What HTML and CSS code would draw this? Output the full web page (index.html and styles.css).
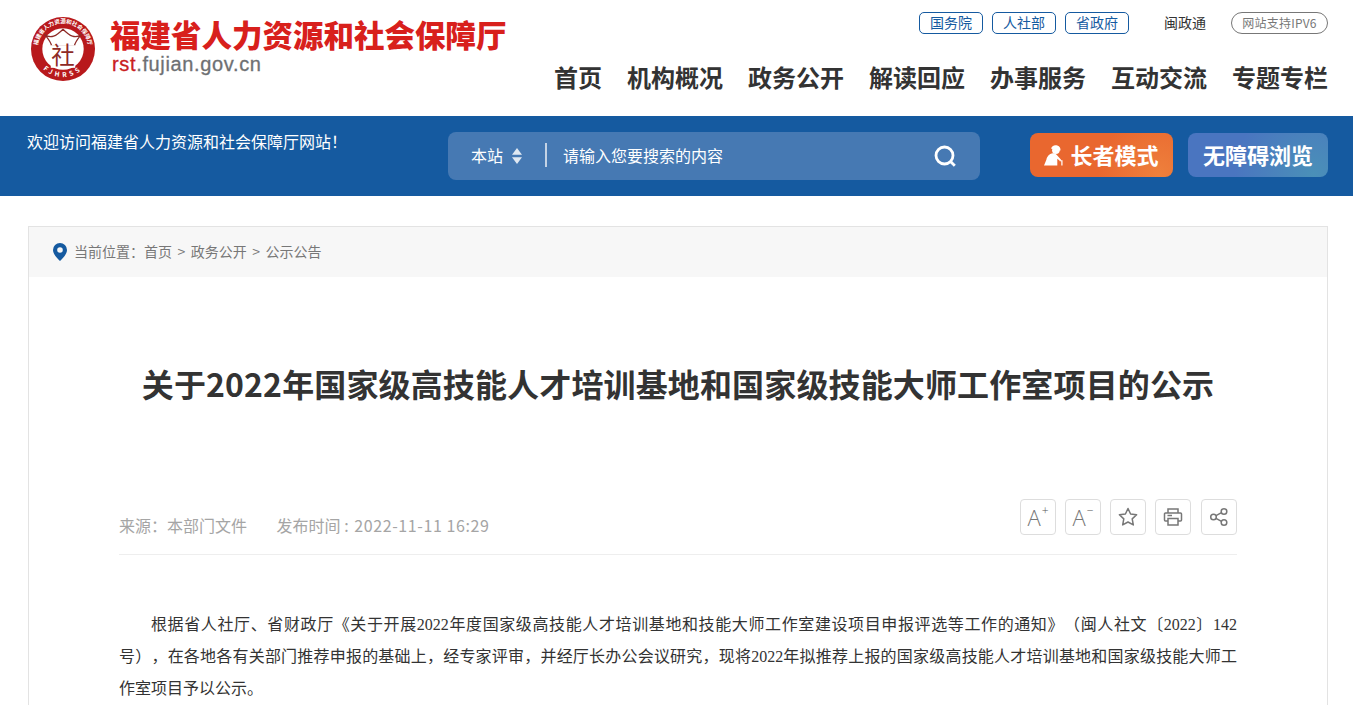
FILE: index.html
```html
<!DOCTYPE html>
<html lang="zh-CN">
<head>
    <meta charset="UTF-8">
    <title>关于2022年国家级高技能人才培训基地和国家级技能大师工作室项目的公示</title>
    <link rel="stylesheet" href="styles.css">
</head>
<body>
    <header class="cabecera">
        <div class="marca">
            <svg class="sello" viewBox="0 0 68 68" width="64" height="64">
                <defs>
                    <path id="aroArriba" d="M10.500 47A27 27 0 1 1 57.500 47"/>
                    <path id="aroAbajo" d="M6 46A31 31 0 0 0 62 46"/>
                </defs>
                <circle cx="34" cy="34" r="34" fill="#b8191c"/>
                <circle cx="34" cy="34" r="22" fill="#fff"/>
                <text class="sello-aro"><textPath href="#aroArriba" startOffset="50%" text-anchor="middle">福建省人力资源和社会保障厅</textPath></text>
                <text class="sello-pie"><textPath href="#aroAbajo" startOffset="50%" text-anchor="middle">FJHRSS</textPath></text>
                <path d="M14 18c7 6 13 2 20-5 7 7 13 11 20 5-4 5-7 8-8 13H22c-1-5-4-8-8-13z" fill="#fff" stroke="#8e2a26" stroke-width="1.300"/>
                <rect x="21" y="30" width="26" height="24" fill="#fff"/>
                <text x="34" y="50" class="sello-centro" text-anchor="middle">社</text>
            </svg>
            <div class="marca-textos">
                <div class="marca-nombre">福建省人力资源和社会保障厅</div>
                <div class="marca-url"><span class="rojo">rst</span>.fujian.gov.cn</div>
            </div>
        </div>
        <div class="cabecera-der">
            <div class="enlaces">
                <a class="pastilla">国务院</a>
                <a class="pastilla">人社部</a>
                <a class="pastilla">省政府</a>
                <a class="minzheng">闽政通</a>
                <a class="ipv6">网站支持IPV6</a>
            </div>
            <nav class="menu">
                <a>首页</a>
                <a>机构概况</a>
                <a>政务公开</a>
                <a>解读回应</a>
                <a>办事服务</a>
                <a>互动交流</a>
                <a>专题专栏</a>
            </nav>
        </div>
    </header>

    <div class="franja">
        <div class="bienvenida">欢迎访问福建省人力资源和社会保障厅网站！</div>
        <div class="buscador">
            <span class="ambito">本站</span>
            <svg class="flechas" viewBox="0 0 10 16" width="10" height="16">
                <path d="M5 0l5 6.800H0zM5 16L0 9.200h10z" fill="#dfe8f2"/>
            </svg>
            <span class="separador"></span>
            <span class="consulta">请输入您要搜索的内容</span>
            <svg class="lupa" viewBox="0 0 22 22" width="22" height="22">
                <circle cx="10.500" cy="10.500" r="8.500" fill="none" stroke="#fff" stroke-width="2.800"/>
                <path d="M16.500 16.500l4.300 4.300" stroke="#fff" stroke-width="2.800" fill="none"/>
            </svg>
        </div>
        <a class="boton boton-mayores">
            <svg viewBox="0 0 20 22" width="19" height="22">
                <path d="M7.500 4.500C8 1.500 11 0 14 1c2.500.8 3.800 3 3.300 5.300-4-.2-7-1.500-9.800-1.800z" fill="#fff"/>
                <circle cx="12.500" cy="6" r="4" fill="#fff"/>
                <path d="M8 9.500C4 11 3 14 2.500 16L0 22h14v-7l3 2.200 1-1.200-5-5.500c-1.500-1.500-3-1.500-5-1z" fill="#fff"/>
                <path d="M16.500 16.500H19.500V22h-1.300v-4.300h-1.700z" fill="#fff"/>
            </svg>
            长者模式
        </a>
        <a class="boton boton-accesible">无障碍浏览</a>
    </div>

    <main class="tarjeta">
        <div class="migas">
            <svg viewBox="0 0 14 18" width="14" height="18">
                <path fill-rule="evenodd" d="M7 0a7 7 0 0 1 7 7c0 4-4 8-7 11-3-3-7-7-7-11a7 7 0 0 1 7-7zm0 4.200a2.800 2.800 0 1 0 0 5.600 2.800 2.800 0 0 0 0-5.600z" fill="#155aa0"/>
            </svg>
            <span>当前位置：</span><a>首页</a><i>&gt;</i><a>政务公开</a><i>&gt;</i><a>公示公告</a>
        </div>
        <article class="articulo">
            <h1 class="titulo">关于2022年国家级高技能人才培训基地和国家级技能大师工作室项目的公示</h1>
            <div class="datos">
                <div class="datos-texto">
                    <span class="fuente">来源：本部门文件</span>
                    <span>发布时间 : <span class="fecha">2022-11-11 16:29</span></span>
                </div>
                <div class="acciones">
                    <a class="accion letra">A<sup>+</sup></a>
                    <a class="accion letra">A<sup>−</sup></a>
                    <a class="accion">
                        <svg viewBox="0 0 20 20" width="20" height="20">
                            <path d="M10 1.500l2.600 5.500 6 .8-4.400 4.100 1.100 6L10 15l-5.300 2.900 1.100-6L1.400 7.800l6-.8z" fill="none" stroke="#777" stroke-width="1.500" stroke-linejoin="round"/>
                        </svg>
                    </a>
                    <a class="accion">
                        <svg viewBox="0 0 20 20" width="20" height="20">
                            <path d="M5 6V2h10v4M5 14H2.500a1 1 0 0 1-1-1V7a1 1 0 0 1 1-1h15a1 1 0 0 1 1 1v6a1 1 0 0 1-1 1H15M5 11.500h10V18H5zM4.500 8.500H9" fill="none" stroke="#777" stroke-width="1.500"/>
                        </svg>
                    </a>
                    <a class="accion accion-ultima">
                        <svg viewBox="0 0 20 20" width="20" height="20">
                            <circle cx="4.500" cy="10" r="2.800" fill="none" stroke="#777" stroke-width="1.500"/>
                            <circle cx="15" cy="4.500" r="2.800" fill="none" stroke="#777" stroke-width="1.500"/>
                            <circle cx="15" cy="15.500" r="2.800" fill="none" stroke="#777" stroke-width="1.500"/>
                            <path d="M7 8.700l5.500-3M7 11.300l5.500 3" stroke="#777" stroke-width="1.500"/>
                        </svg>
                    </a>
                </div>
            </div>
            <p class="parrafo">根据省人社厅、省财政厅《关于开展2022年度国家级高技能人才培训基地和技能大师工作室建设项目申报评选等工作的通知》（闽人社文〔2022〕142号），在各地各有关部门推荐申报的基础上，经专家评审，并经厅长办公会议研究，现将2022年拟推荐上报的国家级高技能人才培训基地和国家级技能大师工作室项目予以公示。</p>
        </article>
    </main>
</body>
</html>
```

FILE: styles.css
```css
html, body {
    margin: 0;
    padding: 0;
    height: 707px;
    overflow: hidden;
}

body {
    background-color: #fff;
    color: #333;
    font-family: "Noto Sans CJK SC", "Noto Sans", sans-serif;
}

a { color: inherit; text-decoration: none; }

.cabecera {
    height: 116px;
    box-sizing: border-box;
    padding: 0 25px 0 31px;
    display: flex;
    justify-content: space-between;
}

.marca {
    display: flex;
    gap: 15px;
    padding-top: 17px;
    align-items: flex-start;
}

.sello-centro { font-size: 25px; fill: #8e2a26; }

.sello-aro { font-size: 6px; font-weight: 700; fill: #fff; }

.sello-pie { font-size: 7px; font-weight: 700; fill: #fff; letter-spacing: 3.500px; }

.marca-nombre {
    color: #d8201c;
    font-size: 30.500px;
    font-weight: 900;
    line-height: 36px;
    margin-top: -1px;
    white-space: nowrap;
}

.marca-url {
    color: #6e7073;
    font-family: "Liberation Sans", sans-serif;
    font-size: 20px;
    line-height: 22px;
    letter-spacing: .65px;
    -webkit-text-stroke: .3px #6e7073;
    margin: 1px 0 0 2px;
}

.rojo { color: #c9201d; -webkit-text-stroke: .3px #c9201d; }

.cabecera-der {
    display: flex;
    flex-direction: column;
    align-items: flex-end;
    padding-top: 12px;
}

.enlaces {
    display: flex;
    align-items: center;
    font-size: 14px;
}

.pastilla {
    width: 62px;
    height: 20px;
    line-height: 18px;
    border: 1px solid #155aa0;
    border-radius: 5px;
    color: #155aa0;
    text-align: center;
    margin-right: 9px;
}

.minzheng { margin: 0 25px 0 26px; line-height: 18px; padding-bottom: 2px; }

.ipv6 {
    width: 95px;
    height: 20px;
    line-height: 20px;
    border: 1px solid #777;
    border-radius: 11px;
    color: #777;
    text-align: center;
    font-size: 12px;
    letter-spacing: .2px;
}

.menu {
    display: flex;
    gap: 25px;
    margin-top: 26px;
    font-size: 24px;
    font-weight: 700;
    line-height: 34px;
    color: #333;
}

.franja {
    height: 80px;
    background-color: #155aa0;
    display: flex;
    align-items: flex-start;
    color: #fff;
    box-sizing: border-box;
    padding: 16px 25px 0 27px;
}

.bienvenida {
    width: 421px;
    font-size: 16px;
    line-height: 22px;
    margin-top: -2px;
}

.buscador {
    width: 532px;
    height: 48px;
    box-sizing: border-box;
    padding: 0 24px 2px 23px;
    border-radius: 8px;
    background-color: #4679b3;
    display: flex;
    align-items: center;
    font-size: 16px;
}

.flechas { margin: 2px 0 0 9px; }

.separador {
    width: 2px;
    height: 24px;
    background-color: #c4d3e5;
    margin: 0 16px 0 23px;
}

.consulta { flex: 1; }

.lupa { margin-top: 1px; }

.boton {
    height: 44px;
    box-sizing: border-box;
    padding-bottom: 2px;
    border-radius: 8px;
    font-size: 22px;
    font-weight: 700;
    margin-top: 1px;
    display: flex;
    align-items: center;
    justify-content: center;
}

.boton-mayores {
    width: 143px;
    margin-left: 50px;
    gap: 7px;
    background: radial-gradient(circle at 90% 95%, #ee803c, #e9672f 45%);
}

.boton-mayores svg { margin-top: 2px; }

.boton-accesible {
    width: 140px;
    margin-left: 15px;
    background: radial-gradient(circle at 90% 95%, #4a90b8, #4a75c0 60%);
}

.tarjeta {
    width: 1300px;
    box-sizing: border-box;
    margin: 30px 0 0 28px;
    border: 1px solid #e3e3e3;
    border-bottom: 0;
}

.migas {
    height: 50px;
    box-sizing: border-box;
    padding: 0 0 2px 24px;
    background-color: #f7f7f7;
    display: flex;
    align-items: center;
    font-size: 14px;
    color: #777;
}

.migas svg { margin: 2px 7px 0 0; }

.migas i {
    font-style: normal;
    margin: 0 5.500px;
}

.articulo { padding: 0 90px; }

.titulo {
    margin: 83px 0 0;
    font-size: 32px;
    font-weight: 700;
    line-height: 46px;
    letter-spacing: .14px;
    color: #333;
    text-align: center;
    white-space: nowrap;
}

.datos {
    margin-top: 93px;
    height: 56px;
    box-sizing: border-box;
    border-bottom: 1px solid #eee;
    display: flex;
    justify-content: space-between;
    align-items: flex-start;
}

.datos-texto {
    padding-top: 14px;
    font-size: 16px;
    line-height: 24px;
    color: #a5a5a5;
}

.fuente { margin-right: 26px; }

.fecha { letter-spacing: .6px; margin-left: 2px; }

.acciones {
    display: flex;
    gap: 9px;
}

.accion {
    width: 34px;
    height: 34px;
    border: 1px solid #ddd;
    border-radius: 4px;
    display: flex;
    align-items: center;
    justify-content: center;
    color: #777;
}

.accion-ultima { margin-left: 1px; }

.letra {
    font-size: 22px;
    font-weight: 300;
    font-family: "Open Sans", sans-serif;
}

.letra sup {
    font-size: 12px;
    line-height: 1;
    margin: -12px 0 0 1px;
    color: #555;
}

.parrafo {
    margin: 54px 0 0;
    font-family: "Liberation Serif", "Noto Sans CJK SC", serif;
    font-size: 16px;
    line-height: 32px;
    text-indent: 2em;
    text-align: justify;
    text-spacing-trim: space-all;
    color: #333;
}
```
